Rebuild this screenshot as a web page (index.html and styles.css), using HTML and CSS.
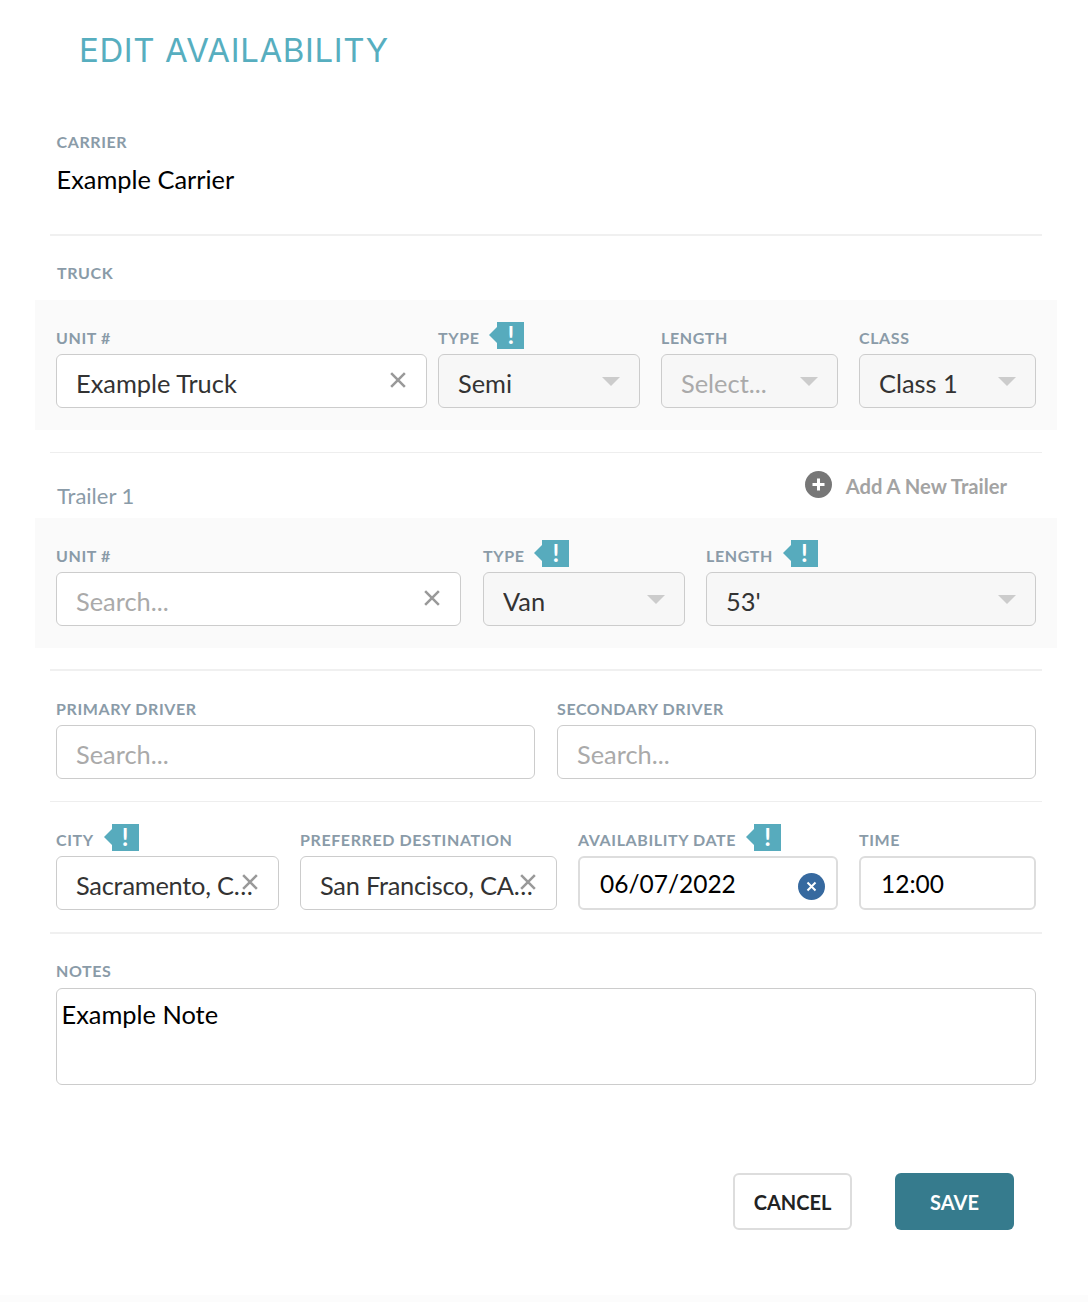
FILE: index.html
```html
<!DOCTYPE html>
<html lang="en">
<head>
<meta charset="utf-8">
<title>Edit Availability</title>
<link rel="stylesheet" href="styles.css">
</head>
<body>
<main class="dialog">
  <h1 class="title">EDIT AVAILABILITY</h1>

  <section class="carrier">
    <div class="label">CARRIER</div>
    <div class="carrier-name">Example Carrier</div>
  </section>
  <hr class="rule thick">

  <div class="label section-label">TRUCK</div>
  <section class="panel">
    <div class="field w-unit tight">
      <div class="label-row"><span class="label">UNIT #</span></div>
      <div class="control"><span class="value">Example Truck</span>
        <svg class="clear" viewBox="0 0 14 14"><path d="M1 1L13 13M13 1L1 13"/></svg></div>
    </div>
    <div class="field w-type">
      <div class="label-row"><span class="label">TYPE</span><span class="flag">!</span></div>
      <div class="control select"><span class="value">Semi</span><i class="caret"></i></div>
    </div>
    <div class="field w-small">
      <div class="label-row"><span class="label">LENGTH</span></div>
      <div class="control select"><span class="value muted">Select...</span><i class="caret"></i></div>
    </div>
    <div class="field w-small">
      <div class="label-row"><span class="label">CLASS</span></div>
      <div class="control select"><span class="value">Class 1</span><i class="caret"></i></div>
    </div>
  </section>

  <hr class="rule thin after-panel">
  <div class="trailer-head">
    <span class="trailer-title">Trailer 1</span>
    <span class="add-trailer">
      <svg class="add-icon" viewBox="0 0 27 27"><circle cx="13.5" cy="13.5" r="13.5"/><path d="M13.5 7.5V19.5M7.5 13.5H19.5"/></svg>
      <span class="add-text">Add A New Trailer</span>
    </span>
  </div>
  <section class="panel">
    <div class="field w-trailer">
      <div class="label-row"><span class="label">UNIT #</span></div>
      <div class="control"><span class="value muted">Search...</span>
        <svg class="clear" viewBox="0 0 14 14"><path d="M1 1L13 13M13 1L1 13"/></svg></div>
    </div>
    <div class="field w-type">
      <div class="label-row"><span class="label">TYPE</span><span class="flag">!</span></div>
      <div class="control select"><span class="value">Van</span><i class="caret"></i></div>
    </div>
    <div class="field w-fill">
      <div class="label-row"><span class="label">LENGTH</span><span class="flag">!</span></div>
      <div class="control select"><span class="value">53'</span><i class="caret"></i></div>
    </div>
  </section>
  <hr class="rule thick after-panel-tight">

  <section class="row drivers">
    <div class="field w-half">
      <div class="label-row"><span class="label">PRIMARY DRIVER</span></div>
      <div class="control"><span class="value muted">Search...</span></div>
    </div>
    <div class="field w-half">
      <div class="label-row"><span class="label">SECONDARY DRIVER</span></div>
      <div class="control"><span class="value muted">Search...</span></div>
    </div>
  </section>
  <hr class="rule thin row-rule">

  <section class="row places">
    <div class="field w-city">
      <div class="label-row"><span class="label">CITY</span><span class="flag">!</span></div>
      <div class="control"><span class="value place">Sacramento, CA, USA</span>
        <svg class="clear" viewBox="0 0 14 14"><path d="M1 1L13 13M13 1L1 13"/></svg></div>
    </div>
    <div class="field w-dest">
      <div class="label-row"><span class="label">PREFERRED DESTINATION</span></div>
      <div class="control"><span class="value place">San Francisco, CA, USA</span>
        <svg class="clear" viewBox="0 0 14 14"><path d="M1 1L13 13M13 1L1 13"/></svg></div>
    </div>
    <div class="field w-date">
      <div class="label-row"><span class="label">AVAILABILITY DATE</span><span class="flag">!</span></div>
      <div class="control strong"><span class="value dark">06/07/2022</span>
        <svg class="date-clear" viewBox="0 0 27 27"><circle cx="13.5" cy="13.5" r="13.5"/><path d="M9.5 9.5L17.5 17.5M17.5 9.5L9.5 17.5"/></svg></div>
    </div>
    <div class="field w-small">
      <div class="label-row"><span class="label">TIME</span></div>
      <div class="control strong"><span class="value dark">12:00</span></div>
    </div>
  </section>
  <hr class="rule thick row-rule">

  <section class="notes">
    <div class="label-row notes-label"><span class="label">NOTES</span></div>
    <div class="notes-box">Example Note</div>
  </section>

  <div class="actions">
    <button class="btn cancel" type="button">CANCEL</button>
    <button class="btn save" type="button">SAVE</button>
  </div>
</main>
</body>
</html>
```
FILE: styles.css
```css
* { box-sizing: border-box; }
html, body { margin: 0; padding: 0; background: #fff; }
body {
  height: 1302px;
  overflow: hidden;
  font-family: Lato, "Open Sans", sans-serif;
  color: #333;
}
.dialog {
  width: 1088px;
  height: 1302px;
  padding-top: 30px;
  background: linear-gradient(#fff 1295px, #fcfcfc 1295px);
}
.title {
  margin: 0 0 0 79px;
  height: 41px;
  font-family: Inter, "Open Sans", sans-serif;
  font-size: 33px;
  line-height: 41px;
  font-weight: 400;
  letter-spacing: 0.6px;
  white-space: nowrap;
  color: #57aebf;
}
.label {
  font-size: 16px;
  line-height: 20px;
  font-weight: 700;
  letter-spacing: 0.6px;
  color: #8a9ba8;
  white-space: nowrap;
}
.carrier { padding: 61px 0 0 56.5px; height: 163px; }
.carrier-name {
  margin-top: 11px;
  font-size: 25.4px;
  line-height: 32px;
  color: #000;
}
.rule { margin: 0 46px 0 50px; border: 0; background: #f0f0f0; }
.rule.thick { height: 2px; }
.rule.thin { height: 1px; background: #eeeeee; }
.after-panel { margin-top: 22px; }
.after-panel-tight { margin-top: 21px; }
.row-rule { margin-top: 22px; }
.section-label { padding: 27px 0 17px 57px; height: 64px; }
.panel {
  display: flex;
  gap: 21px;
  width: 1022px;
  height: 130px;
  margin-left: 35px;
  padding: 22px 21px;
  background: #fafafa;
}
.row { display: flex; gap: 21px; padding-left: 56px; }
.drivers { padding-top: 22px; gap: 22px; }
.places { padding-top: 22px; }
.field { flex: none; }
.tight { margin-right: -10px; }
.w-unit { width: 371px; }
.w-type { width: 202px; }
.w-small { width: 177px; }
.w-trailer { width: 405px; margin-right: 1px; }
.w-fill { width: 330px; }
.w-half { width: 479px; }
.w-city { width: 223px; }
.w-dest { width: 257px; }
.w-date { width: 260px; }
.label-row {
  display: flex;
  align-items: center;
  height: 32px;
}
.notes-label { height: 33px; padding-bottom: 1px; }
.flag {
  position: relative;
  flex: none;
  width: 27px;
  height: 27px;
  margin: -5px 0 0 18px;
  background: #57abbd;
  color: #fff;
  font-size: 24px;
  line-height: 25px;
  font-weight: 700;
  text-align: center;
}
.flag::before {
  content: "";
  position: absolute;
  left: -8px;
  top: 5px;
  border-style: solid;
  border-width: 8px 8px 8px 0;
  border-color: transparent #57abbd transparent transparent;
}
.control {
  position: relative;
  display: flex;
  align-items: center;
  height: 54px;
  padding: 3px 20px 0 19px;
  background: #fff;
  border: 1px solid #cccccc;
  border-radius: 6px;
}
.control.select { background: #f7f7f7; }
.control.strong { border: 2px solid #dddddd; padding: 2px 20px 0 20px; }
.value {
  display: block;
  width: 100%;
  overflow: hidden;
  white-space: nowrap;
  text-overflow: ellipsis;
  font-size: 25.4px;
  line-height: 32px;
  color: #333;
}
.value.place { letter-spacing: -0.25px; }
.value.muted { color: #aaaaaa; }
.value.dark { color: #000; font-size: 24.5px; }
.clear {
  position: absolute;
  right: 20px;
  top: 17px;
  width: 16px;
  height: 16px;
  fill: none;
  stroke: #999999;
  stroke-width: 2.2;
}
.caret {
  position: absolute;
  right: 19px;
  top: 22px;
  border-style: solid;
  border-width: 9px 9px 0 9px;
  border-color: #cccccc transparent transparent transparent;
}
.date-clear {
  position: absolute;
  right: 11px;
  top: 15px;
  width: 27px;
  height: 27px;
}
.date-clear circle { fill: #36699f; }
.date-clear path { stroke: #fff; stroke-width: 2; fill: none; }
.trailer-head {
  display: flex;
  justify-content: space-between;
  height: 65px;
  padding: 0 35px 0 57px;
}
.trailer-title {
  margin-top: 29px;
  font-size: 22px;
  line-height: 27px;
  color: #8a9ba8;
}
.add-trailer {
  display: flex;
  align-items: center;
  gap: 14px;
  height: 27px;
  margin-top: 18px;
  margin-right: 46px;
  font-size: 20.2px;
  font-weight: 700;
  color: #a3a3a3;
  white-space: nowrap;
}
.add-text { padding-top: 2px; }
.add-icon { width: 27px; height: 27px; flex: none; }
.add-icon circle { fill: #777777; }
.add-icon path { stroke: #fff; stroke-width: 3; fill: none; }
.notes { padding: 21px 52px 0 56px; }
.notes-box {
  height: 97px;
  padding: 7px 4.5px;
  border: 1px solid #cccccc;
  border-radius: 6px;
  font-size: 25.4px;
  line-height: 36px;
  color: #000;
}
.actions {
  display: flex;
  gap: 43px;
  margin: 88px 0 0 733px;
}
.btn {
  width: 119px;
  height: 57px;
  padding: 0;
  border-radius: 6px;
  font-family: Lato, sans-serif;
  font-size: 20px;
  font-weight: 700;
}
.cancel { background: #fff; border: 2px solid #dddddd; color: #222; }
.save { background: #367b8d; border: 0; color: #fff; }
```
